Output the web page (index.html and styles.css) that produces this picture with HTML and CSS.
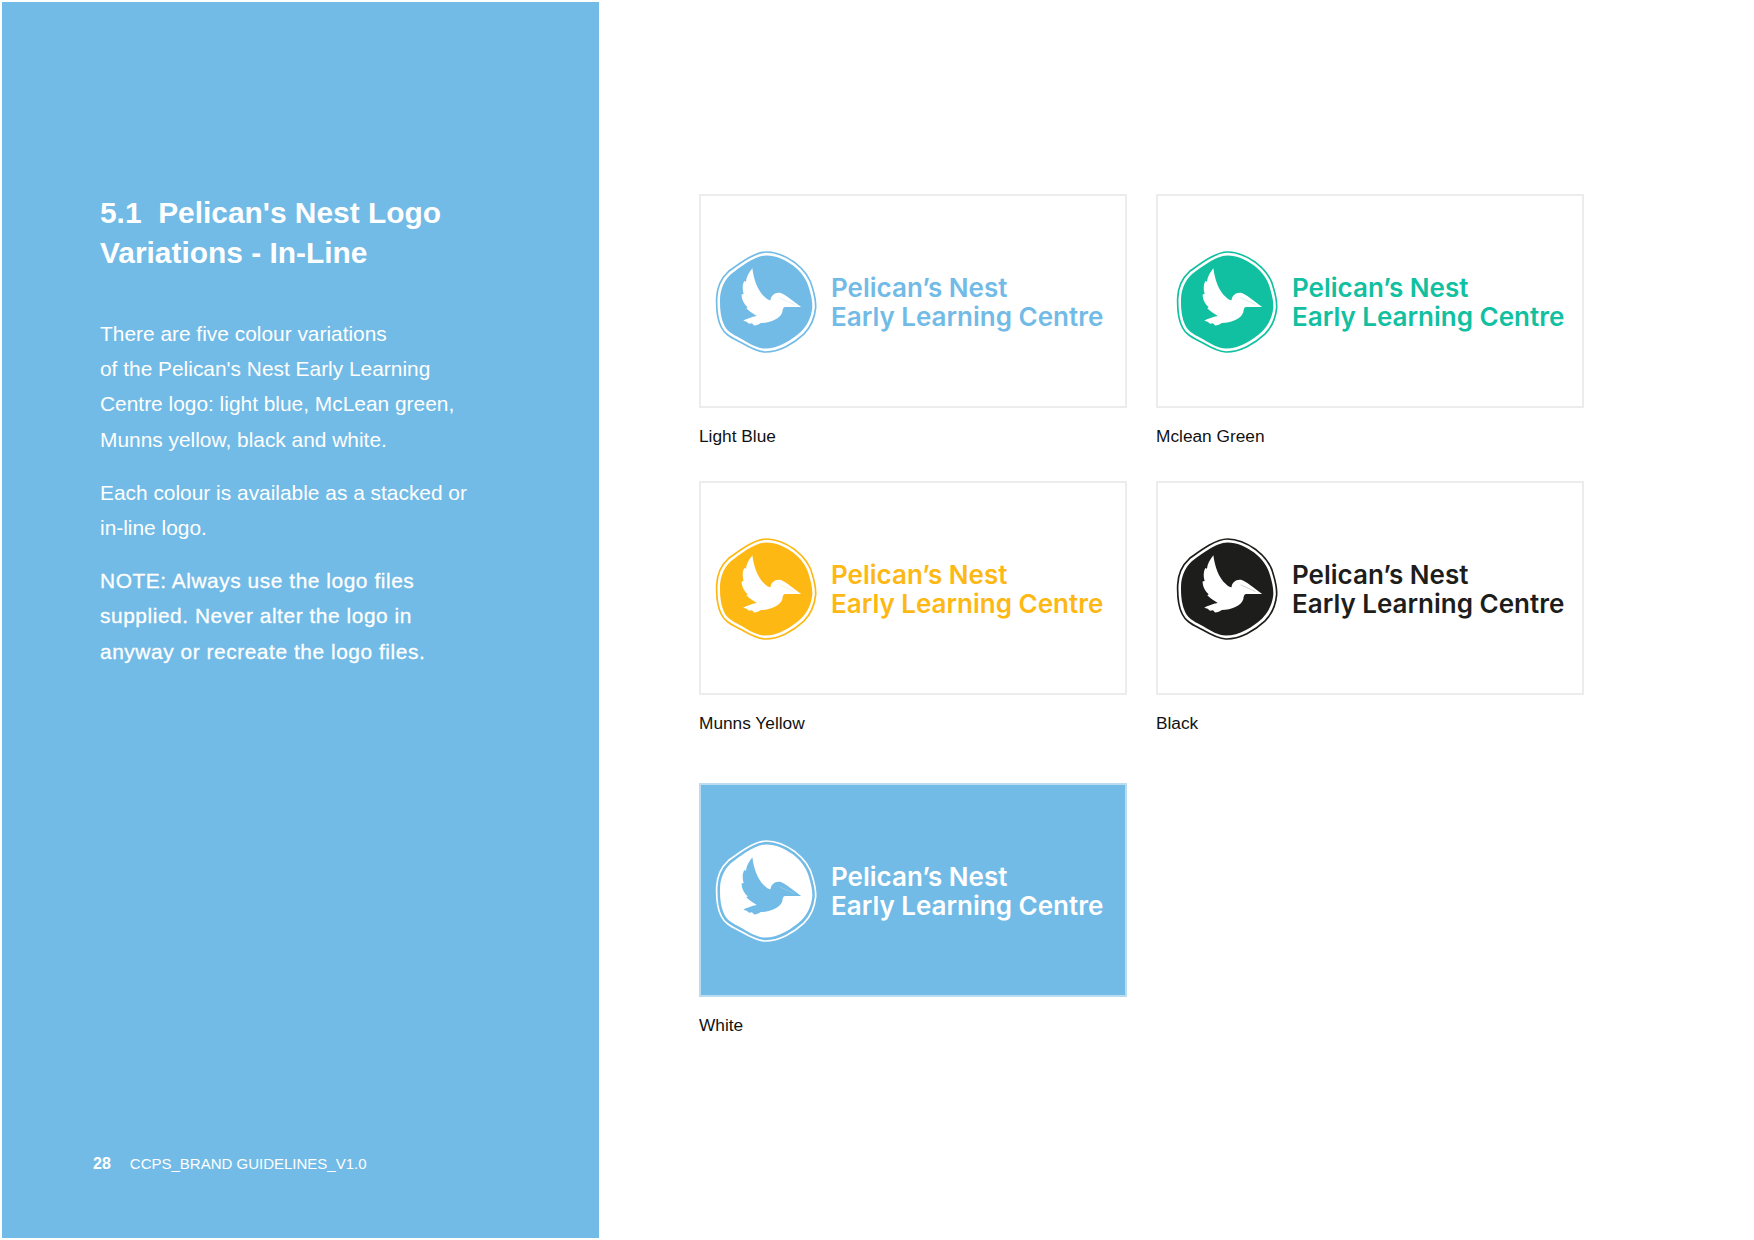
FILE: index.html
```html
<!DOCTYPE html>
<html lang="en">
<head>
<meta charset="utf-8">
<title>5.1 Pelican's Nest Logo Variations - In-Line</title>
<link rel="stylesheet" href="styles.css">
</head>
<body>
<svg class="defs" width="0" height="0" aria-hidden="true">
  <symbol id="mark" viewBox="30 15 310 315">
    <path class="mark-ring" d="M185 24C215 24 245 38 270 56C296 76 316 104 322 132C328 152 332 170 331 190C328 220 318 246 296 268C266 296 222 322 180 321C155 320 132 306 108 292C86 280 62 272 50 246C38 222 36 190 37 160C38 132 50 102 72 82C100 62 148 24 185 24Z"/>
    <path class="mark-fill" d="M185 34C212 34 240 46 264 64C288 82 306 108 312 134C318 154 322 172 321 190C318 216 308 240 288 260C260 286 220 311 180 311C158 310 136 298 114 284C92 272 70 264 59 241C48 218 46 190 47 161C48 136 59 108 79 90C106 70 150 34 185 34Z"/>
    <path class="mark-bird" d="M143 72C147 104 158 138 180 158C186 164 191 168 197 167C198 153 210 143 225 145C240 149 264 170 288 187L240 187C234 188 233 194 232 203C226 222 196 235 168 235C162 239 156 242 148 242L142 236L133 237L126 231L116 228C124 223 133 222 141 218C146 215 152 216 156 214C146 207 134 201 125 191L129 188C119 179 111 165 111 150L117 149C113 134 113 122 119 110L124 112C125 98 133 84 143 72Z"/>
    <path class="mark-beak" d="M224 160L268 180"/>
  </symbol>
</svg>
<div class="page">
  <aside class="panel">
    <div class="panel-main">
      <h1 class="title">5.1&nbsp; Pelican's Nest Logo<br>Variations - In-Line</h1>
      <p class="copy">There are five colour variations<br>of the Pelican's Nest Early Learning<br>Centre logo: light blue, McLean green,<br>Munns yellow, black and white.</p>
      <p class="copy">Each colour is available as a stacked or<br>in-line logo.</p>
      <p class="copy note">NOTE: Always use the logo files<br>supplied. Never alter the logo in<br>anyway or recreate the logo files.</p>
    </div>
    <footer class="folio"><b class="folio-num">28</b><span>CCPS_BRAND GUIDELINES_V1.0</span></footer>
  </aside>
  <main class="gallery">
    <figure class="item">
      <div class="card blue"><svg class="mark"><use href="#mark"/></svg><div class="wordmark">Pelican’s Nest<br>Early Learning Centre</div></div>
      <figcaption class="caption">Light Blue</figcaption>
    </figure>
    <figure class="item">
      <div class="card right green"><svg class="mark"><use href="#mark"/></svg><div class="wordmark">Pelican’s Nest<br>Early Learning Centre</div></div>
      <figcaption class="caption">Mclean Green</figcaption>
    </figure>
    <figure class="item">
      <div class="card yellow"><svg class="mark"><use href="#mark"/></svg><div class="wordmark">Pelican’s Nest<br>Early Learning Centre</div></div>
      <figcaption class="caption">Munns Yellow</figcaption>
    </figure>
    <figure class="item">
      <div class="card right black"><svg class="mark"><use href="#mark"/></svg><div class="wordmark">Pelican’s Nest<br>Early Learning Centre</div></div>
      <figcaption class="caption">Black</figcaption>
    </figure>
    <figure class="item last">
      <div class="card reversed"><svg class="mark"><use href="#mark"/></svg><div class="wordmark">Pelican’s Nest<br>Early Learning Centre</div></div>
      <figcaption class="caption">White</figcaption>
    </figure>
  </main>
</div>
</body>
</html>
```

FILE: styles.css
```css
* { box-sizing: border-box; }
html, body { margin: 0; padding: 0; background: #fff; }
body { width: 1754px; height: 1240px; overflow: hidden; font-family: "Liberation Sans", Arial, sans-serif; }
.defs { position: absolute; }
.page { display: flex; height: 100%; padding: 2px 0 2px 2px; }

.panel {
  width: 597px;
  flex: none;
  background: #72bbe6;
  color: #fff;
  display: flex;
  flex-direction: column;
  justify-content: space-between;
  padding: 191px 0 65px 98px;
}
.title { margin: 0 0 43px; font-size: 29.9px; line-height: 40px; font-weight: 700; }
.copy { margin: 0 0 18px; font-size: 20.9px; line-height: 35.2px; }
.note { letter-spacing: 0.55px; -webkit-text-stroke: 0.3px #fff; }
.folio { display: flex; gap: 19px; margin-left: -7px; font-size: 15px; line-height: 18px; }
.folio-num { font-weight: 700; font-size: 16px; }

.gallery {
  display: grid;
  grid-template-columns: 428px 428px;
  column-gap: 29px;
  align-content: start;
  padding: 192px 0 0 100px;
}
.item { margin: 0 0 34px; }
.item.last { margin-top: 15px; }
.card {
  height: 214px;
  display: flex;
  align-items: center;
  gap: 12px;
  padding-left: 13px;
  border: 2px solid #ececec;
  color: var(--logo);
  --logo: #72bbe6;
  --logo-bird: #fff;
}
.card.right { padding-left: 17px; }
.blue { --logo: #72bbe6; }
.green { --logo: #10c0a0; }
.yellow { --logo: #fdb813; }
.black { --logo: #1d1d1b; }
.reversed { --logo: #fff; --logo-bird: #72bbe6; background: #72bbe6; border-color: #b9dcf1; }

.mark { width: 105px; height: 106px; flex: none; margin-top: 2px; }
.mark-ring { fill: none; stroke: var(--logo); stroke-width: 5; }
.mark-fill { fill: var(--logo); }
.mark-bird { fill: var(--logo-bird); }
.mark-beak { fill: none; stroke: var(--logo); stroke-width: 1.5; opacity: 0.4; }
.wordmark { font-family: Inter, "Liberation Sans", sans-serif; font-weight: 600; font-size: 26px; line-height: 29px; margin-top: 2px; }
.caption { margin-top: 17px; height: 22px; font-size: 17.3px; line-height: 22px; color: #111; }
```
